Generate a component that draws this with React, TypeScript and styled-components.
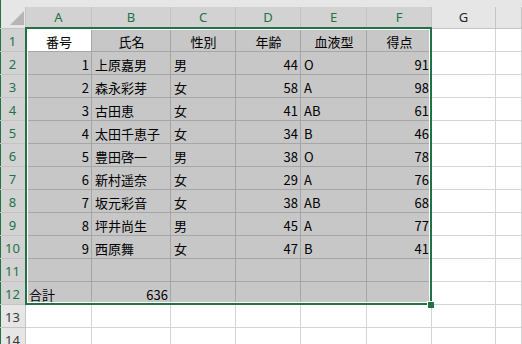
import React from 'react';
import styled, { createGlobalStyle, css } from 'styled-components';

const GREEN = '#217346';

const GlobalStyle = createGlobalStyle`
  html, body {
    margin: 0;
    padding: 0;
    background: #ffffff;
    overflow: hidden;
  }
  body {
    font-family: "Noto Sans CJK JP", "Noto Sans", sans-serif;
  }
`;

const COLUMNS = ['A', 'B', 'C', 'D', 'E', 'F', 'G', 'H'];
const SELECTED_COLS = 6; // A..F
const SELECTED_ROWS = 12;
const TOTAL_ROWS = 14;

type Align = 'left' | 'right' | 'center';
type Value = string | number | null;

const header: Value[] = ['番号', '氏名', '性別', '年齢', '血液型', '得点'];
const headerAlign: Align[] = ['center', 'center', 'center', 'center', 'center', 'center'];
const bodyAlign: Align[] = ['right', 'left', 'left', 'right', 'left', 'right'];

const people: Value[][] = [
  [1, '上原嘉男', '男', 44, 'O', 91],
  [2, '森永彩芽', '女', 58, 'A', 98],
  [3, '古田恵', '女', 41, 'AB', 61],
  [4, '太田千恵子', '女', 34, 'B', 46],
  [5, '豊田啓一', '男', 38, 'O', 78],
  [6, '新村遥奈', '女', 29, 'A', 76],
  [7, '坂元彩音', '女', 38, 'AB', 68],
  [8, '坪井尚生', '男', 45, 'A', 77],
  [9, '西原舞', '女', 47, 'B', 41],
];

const Sheet = styled.div`
  position: relative;
  width: 522px;
  height: 344px;
  overflow: hidden;
  background: #ffffff;
`;

const TopStrip = styled.div`
  height: 7px;
  background: #e6e6e6;
  box-shadow: inset 1px 0 0 ${GREEN};
`;

const Grid = styled.div`
  display: grid;
  grid-template-columns: 26px 66px 79px 65px 65px 66px 65px 64px 1fr;
  grid-template-rows: 22px;
  grid-auto-rows: 23px;
`;

const headerBase = css`
  box-sizing: border-box;
  display: flex;
  align-items: center;
  justify-content: center;
  font-family: "Noto Sans", "Liberation Sans", sans-serif;
  font-size: 13px;
  border-right: 1px solid #c4c4c4;
  border-bottom: 1px solid #c4c4c4;
`;

const Corner = styled.div`
  ${headerBase};
  background: #e6e6e6;
  align-items: flex-end;
  justify-content: flex-end;
  padding: 0 1px 3px 0;
  box-shadow: inset 1px 0 0 ${GREEN};
`;

const ColHeader = styled.div<{ $sel: boolean }>`
  ${headerBase};
  padding-bottom: 2px;
  background: ${(p) => (p.$sel ? '#d2d2d2' : '#e6e6e6')};
  color: ${(p) => (p.$sel ? GREEN : '#262626')};
  ${(p) =>
    p.$sel &&
    css`
      border-bottom-color: ${GREEN};
      box-shadow: inset 0 -1px 0 ${GREEN};
    `}
`;

const RowHeader = styled.div<{ $sel: boolean }>`
  ${headerBase};
  padding-top: 1px;
  background: ${(p) => (p.$sel ? '#d2d2d2' : '#e6e6e6')};
  color: ${(p) => (p.$sel ? GREEN : '#3a3a3a')};
  box-shadow: inset 1px 0 0 ${GREEN};
`;

const Cell = styled.div<{ $sel: boolean; $active?: boolean; $align: Align }>`
  box-sizing: border-box;
  display: flex;
  align-items: center;
  padding: 2px 2px 0 3px;
  font-size: 13px;
  color: #000000;
  white-space: nowrap;
  overflow: hidden;
  justify-content: ${(p) =>
    p.$align === 'right' ? 'flex-end' : p.$align === 'center' ? 'center' : 'flex-start'};
  background: ${(p) => (p.$active ? '#ffffff' : p.$sel ? '#c7c7c7' : '#ffffff')};
  border-right: 1px solid ${(p) => (p.$sel ? '#a6a6a6' : '#d4d4d4')};
  border-bottom: 1px solid ${(p) => (p.$sel ? '#a6a6a6' : '#d4d4d4')};
`;

/* Bold outline around the selected range A1:F12 */
const Selection = styled.div`
  position: absolute;
  left: 25px;
  top: 27px;
  width: 407px;
  height: 278px;
  box-sizing: border-box;
  border: 2px solid ${GREEN};
  box-shadow: inset 1px 1px 0 #ffffff, inset -1px -1px 0 #ffffff;
  pointer-events: none;
`;

const FillHandle = styled.div`
  position: absolute;
  left: 427px;
  top: 301px;
  width: 7px;
  height: 7px;
  box-sizing: border-box;
  background: ${GREEN};
  border-top: 1px solid #ffffff;
  border-left: 1px solid #ffffff;
`;

const CornerMark = () => (
  <svg width="14" height="14" viewBox="0 0 14 14">
    <polygon points="14,0 14,14 0,14" fill="#b5b5b5" />
  </svg>
);

function rowValues(r: number): { values: Value[]; align: Align[] } {
  if (r === 1) return { values: header, align: headerAlign };
  if (r >= 2 && r <= 10) return { values: people[r - 2], align: bodyAlign };
  if (r === 12) return { values: ['合計', 636, null, null, null, null], align: ['left', 'right', 'left', 'left', 'left', 'left'] };
  return { values: [], align: [] };
}

export default function App() {
  const rows = Array.from({ length: TOTAL_ROWS }, (_, i) => i + 1);
  return (
    <>
      <GlobalStyle />
      <Sheet>
        <TopStrip />
        <Grid>
          <Corner>
            <CornerMark />
          </Corner>
          {COLUMNS.map((c, i) => (
            <ColHeader key={c} $sel={i < SELECTED_COLS}>
              {i < 7 ? c : ''}
            </ColHeader>
          ))}
          {rows.map((r) => {
            const sel = r <= SELECTED_ROWS;
            const { values, align } = rowValues(r);
            return (
              <React.Fragment key={r}>
                <RowHeader $sel={sel}>{r}</RowHeader>
                {COLUMNS.map((c, ci) => {
                  const inRange = sel && ci < SELECTED_COLS;
                  const v = values[ci];
                  return (
                    <Cell
                      key={c}
                      $sel={inRange}
                      $active={r === 1 && ci === 0}
                      $align={align[ci] ?? 'left'}
                    >
                      {v ?? ''}
                    </Cell>
                  );
                })}
              </React.Fragment>
            );
          })}
        </Grid>
        <Selection />
        <FillHandle />
      </Sheet>
    </>
  );
}
